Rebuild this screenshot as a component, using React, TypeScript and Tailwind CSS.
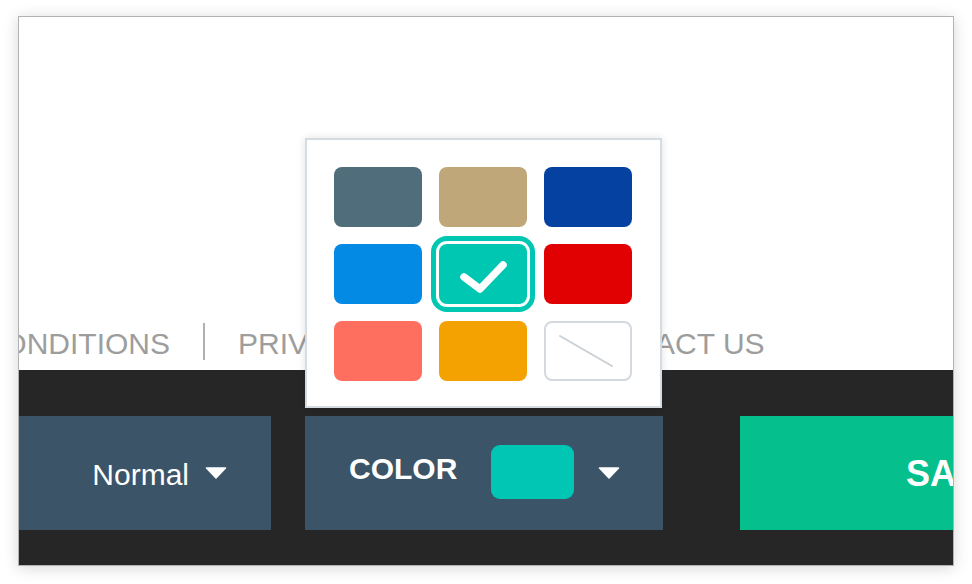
import React from "react";

const swatches = [
  "#4f6d7a",
  "#c0a779",
  "#0541a0",
  "#038ae5",
  "#00c7b2",
  "#e10002",
  "#ff6f5f",
  "#f4a201",
];

function Caret() {
  return (
    <svg width="22" height="12" viewBox="0 0 22 12" className="shrink-0">
      <path d="M1.5 1 L20.5 1 L11 11 Z" fill="#ffffff" stroke="#ffffff" strokeWidth="1.5" strokeLinejoin="round" />
    </svg>
  );
}

export default function App() {
  const font = { fontFamily: '"Liberation Sans", Arial, sans-serif' };
  return (
    <div className="w-[972px] h-[584px] bg-white pt-[16px] pl-[18px]" style={font}>
      <div className="relative w-[936px] h-[550px] border border-[#b2b2b2] shadow-[0_2px_14px_rgba(0,0,0,0.16)] flex flex-col overflow-hidden bg-white">
        {/* white top area with footer links */}
        <div className="h-[353px] shrink-0 pt-[306px] overflow-hidden">
          <div className="flex items-start ml-[-179px] whitespace-nowrap text-[30px] leading-[30px] text-[#9d9d9d]">
            <span className="mt-[6px]">TERMS &amp; CONDITIONS</span>
            <span className="w-[2px] h-[37px] bg-[#b0b0b0] ml-[33px] mr-[33px]" />
            <span className="mt-[6px]">PRIVACY POLICY</span>
            <span className="w-[2px] h-[37px] bg-[#b0b0b0] ml-[43px] mr-[42px]" />
            <span className="mt-[6px]">CONTACT US</span>
          </div>
        </div>
        {/* dark toolbar */}
        <div className="flex-1 bg-[#262626] pt-[46px]">
          <div className="flex h-[114px]">
            <div className="w-[252px] shrink-0 bg-[#3b5467] flex items-center justify-end pr-[44px] gap-[16px] text-white text-[30px]">
              <span className="mt-[2px]">Normal</span>
              <Caret />
            </div>
            <div className="w-[358px] shrink-0 ml-[34px] bg-[#3b5467] flex items-center pl-[44px] text-white">
              <span className="text-[30px] font-bold leading-none mb-[8px]">COLOR</span>
              <div className="ml-[34px] mb-[2px] w-[83px] h-[54px] rounded-[9px] bg-[#00c6b3]" />
              <div className="ml-[24px]">
                <Caret />
              </div>
            </div>
            <div className="flex-1 ml-[77px] bg-[#05bf8c] flex items-center pl-[166px] text-white text-[36px] font-bold whitespace-nowrap overflow-hidden">
              <span className="mt-[2px]">SAVE</span>
            </div>
          </div>
        </div>

        {/* colour popover */}
        <div className="absolute left-[286px] top-[121px] w-[357px] h-[270px] bg-white border-2 border-[#d4dbe1] shadow-[0_0_8px_rgba(0,0,0,0.12)] pl-[27px] pt-[27px]">
          <div className="grid grid-cols-[88px_88px_88px] grid-rows-[60px_60px_60px] gap-[17px]">
            {swatches.map((c, i) =>
              i === 4 ? (
                <div
                  key={i}
                  className="relative rounded-[8px] shadow-[0_0_0_3px_#ffffff,0_0_0_8px_#00c7b2]"
                  style={{ backgroundColor: c }}
                >
                  <svg width="88" height="60" viewBox="0 0 88 60" className="absolute inset-0">
                    <polyline
                      points="25,33 41,45 64,21"
                      fill="none"
                      stroke="#ffffff"
                      strokeWidth="7.5"
                      strokeLinecap="round"
                      strokeLinejoin="round"
                    />
                  </svg>
                </div>
              ) : (
                <div key={i} className="rounded-[8px]" style={{ backgroundColor: c }} />
              )
            )}
            <div className="relative rounded-[8px] border-2 border-[#d3d9de] bg-white">
              <svg width="88" height="60" viewBox="0 0 88 60" className="absolute left-[-2px] top-[-2px]">
                <line x1="16" y1="15" x2="68" y2="45" stroke="#c9d0d6" strokeWidth="2" strokeLinecap="round" />
              </svg>
            </div>
          </div>
        </div>
      </div>
    </div>
  );
}
